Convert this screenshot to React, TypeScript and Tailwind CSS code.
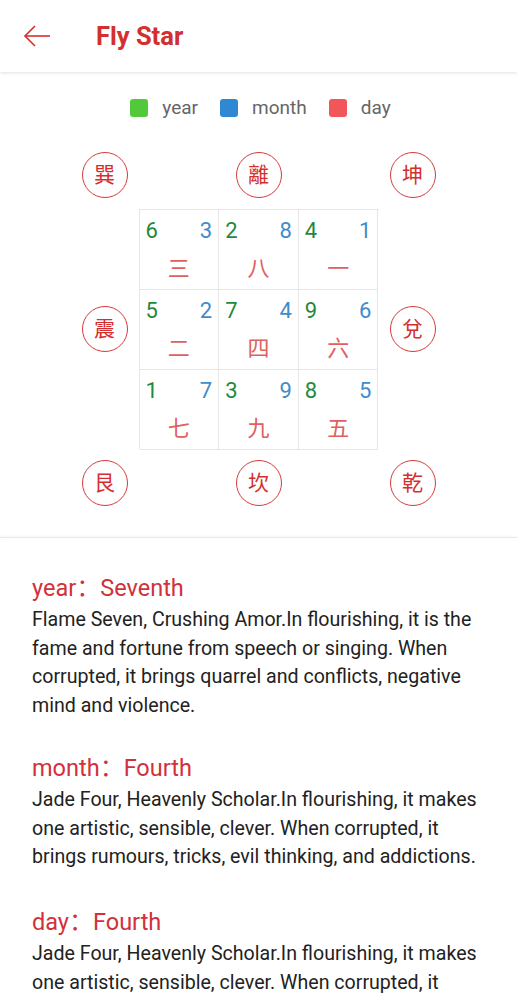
import React from "react";

const cells = [
  { y: 6, m: 3, d: "三" },
  { y: 2, m: 8, d: "八" },
  { y: 4, m: 1, d: "一" },
  { y: 5, m: 2, d: "二" },
  { y: 7, m: 4, d: "四" },
  { y: 9, m: 6, d: "六" },
  { y: 1, m: 7, d: "七" },
  { y: 3, m: 9, d: "九" },
  { y: 8, m: 5, d: "五" },
];

const font = { fontFamily: 'Roboto, "Noto Sans CJK SC", sans-serif' };

function Circle({ c }: { c: string }) {
  return (
    <div className="w-[46px] h-[46px] rounded-full border border-[#d63a3a] flex items-center justify-center text-[#d32f2f] text-[21px] leading-none">
      {c}
    </div>
  );
}

function Section({ title, value, body, extra }: { title: string; value: string; body: string; extra?: boolean }) {
  return (
    <div className={extra ? "mb-[35px]" : "mb-[32px]"}>
      <div className="text-[23.5px] leading-[30px] text-[#d3303a]">
        {title}
        <span className="inline-block w-[24px] text-center">：</span>
        {value}
      </div>
      <div className="text-[19.6px] leading-[28.7px] text-[#222] mt-[3px]">{body}</div>
    </div>
  );
}

export default function App() {
  return (
    <div className="w-[517px] h-[1000px] overflow-hidden bg-white" style={font}>
      <div className="h-[72px] flex items-center bg-white shadow-[0_1px_3px_rgba(0,0,0,0.12)] relative z-10">
        <svg width="28" height="22" viewBox="0 0 28 22" className="ml-[23px]" fill="none" stroke="#d32f2f" strokeWidth="1.6">
          <path d="M27 11H2" />
          <path d="M12 1L2 11L12 21" />
        </svg>
        <div className="ml-[45px] text-[25.5px] font-bold text-[#d32f2f]">Fly Star</div>
      </div>

      <div className="flex justify-center items-center mt-[26px] h-[20px] text-[19px] text-[#666]">
        <div className="flex items-center gap-[14px] ml-[4px]">
          <div className="w-[18px] h-[18px] rounded-[3px] bg-[#52c93a]" />
          <span>year</span>
        </div>
        <div className="flex items-center gap-[14px] ml-[22px]">
          <div className="w-[18px] h-[18px] rounded-[3px] bg-[#2f89d2]" />
          <span>month</span>
        </div>
        <div className="flex items-center gap-[14px] ml-[22px]">
          <div className="w-[18px] h-[18px] rounded-[3px] bg-[#f0565a]" />
          <span>day</span>
        </div>
      </div>

      <div className="flex justify-center mt-[34px]">
        <div className="grid grid-cols-[46px_240px_46px] grid-rows-[46px_240px_46px] gap-x-[11px] gap-y-[11px]">
          <Circle c="巽" />
          <div className="flex justify-center"><Circle c="離" /></div>
          <Circle c="坤" />
          <div className="flex items-center"><Circle c="震" /></div>
          <div className="grid grid-cols-3 border-t border-l border-[#e6e6e6]">
            {cells.map((c, i) => (
              <div key={i} className="h-[80px] border-r border-b border-[#e6e6e6] flex flex-col px-[6px]">
                <div className="flex justify-between text-[22px] leading-none mt-[10px]">
                  <span className="text-[#1f8a3c]">{c.y}</span>
                  <span className="text-[#3f8ccc]">{c.m}</span>
                </div>
                <div className="text-center text-[22px] leading-none mt-[16px] text-[#e06060]">{c.d}</div>
              </div>
            ))}
          </div>
          <div className="flex items-center"><Circle c="兌" /></div>
          <Circle c="艮" />
          <div className="flex justify-center"><Circle c="坎" /></div>
          <Circle c="乾" />
        </div>
      </div>

      <div className="mt-[31px] border-t border-[#e8e8e8] shadow-[0_-1px_2px_rgba(0,0,0,0.04)] pt-[35px] px-[32px]">
        <Section
          title="year"
          value="Seventh"
          body="Flame Seven, Crushing Amor.In flourishing, it is the fame and fortune from speech or singing. When corrupted, it brings quarrel and conflicts, negative mind and violence."
        />
        <Section
          title="month"
          value="Fourth"
          extra
          body="Jade Four, Heavenly Scholar.In flourishing, it makes one artistic, sensible, clever. When corrupted, it brings rumours, tricks, evil thinking, and addictions."
        />
        <Section
          title="day"
          value="Fourth"
          body="Jade Four, Heavenly Scholar.In flourishing, it makes one artistic, sensible, clever. When corrupted, it brings rumours, tricks, evil thinking, and addictions."
        />
      </div>
    </div>
  );
}
